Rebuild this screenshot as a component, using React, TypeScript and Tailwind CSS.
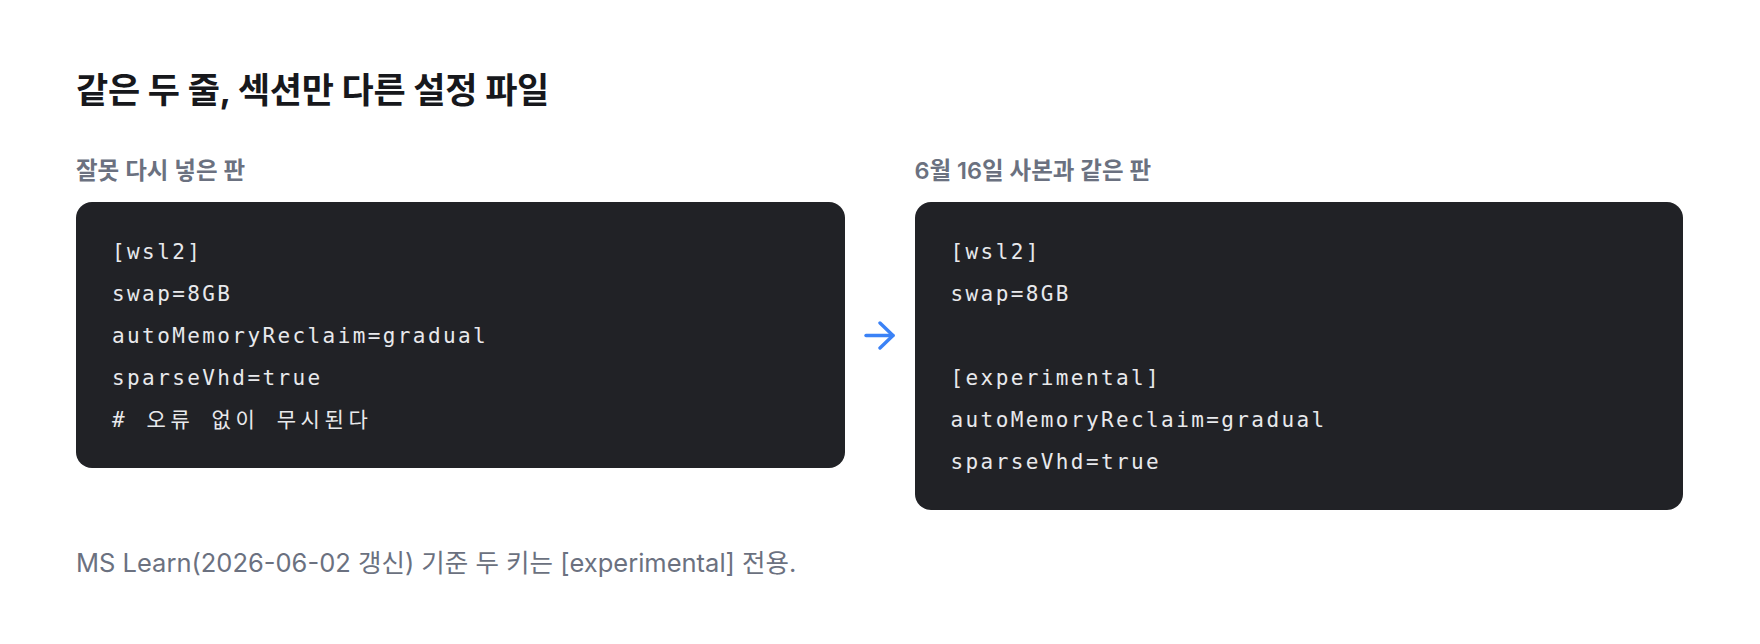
import React from "react";

const left = ["[wsl2]", "swap=8GB", "autoMemoryReclaim=gradual", "sparseVhd=true", "# 오류 없이 무시된다"];
const right = ["[wsl2]", "swap=8GB", "", "[experimental]", "autoMemoryReclaim=gradual", "sparseVhd=true"];

function Code({ lines }: { lines: string[] }) {
  return (
    <pre
      className="rounded-2xl bg-[#212226] px-9 pt-[29px] pb-[27px] text-[21px] leading-[42px] tracking-[2.4px] text-[#e8e9ec] whitespace-pre"
      style={{ fontFamily: '"DejaVu Sans Mono", "Noto Sans CJK KR", monospace' }}
    >
      {lines.map((l, i) => (
        <div key={i} className={l.startsWith("#") ? "h-[42px] tracking-[4.6px]" : "h-[42px]"}>
          {l}
        </div>
      ))}
    </pre>
  );
}

export default function App() {
  return (
    <div
      className="min-h-[644px] bg-white px-[76px] pt-[68px] pr-[77px]"
      style={{ fontFamily: 'Inter, "Noto Sans CJK KR", sans-serif' }}
    >
      <h1 className="text-[35px] font-bold leading-[44px] tracking-[-0.3px] text-[#17181c]">
        같은 두 줄, 섹션만 다른 설정 파일
      </h1>
      <div className="mt-[46px] grid grid-cols-[1fr_70px_1fr] items-start">
        <div>
          <div className="mb-[18px] text-[23.5px] font-semibold leading-[26px] text-[#6b7180]">잘못 다시 넣은 판</div>
          <Code lines={left} />
        </div>
        <div className="mt-[44px] flex h-[266px] items-center justify-center">
          <svg width="31" height="29" viewBox="0 0 31 29" fill="none" stroke="#3b82f6" strokeWidth="3.4" strokeLinecap="round" strokeLinejoin="round">
            <path d="M2 14.5h27" />
            <path d="M16 2l13 12.5L16 27" />
          </svg>
        </div>
        <div>
          <div className="mb-[18px] text-[23.5px] font-semibold leading-[26px] text-[#6b7180]">6월 16일 사본과 같은 판</div>
          <Code lines={right} />
        </div>
      </div>
      <p className="mt-[37px] text-[25.5px] leading-[32px] text-[#6b7180]">
        MS Learn(2026-06-02 갱신) 기준 두 키는 [experimental] 전용.
      </p>
    </div>
  );
}
